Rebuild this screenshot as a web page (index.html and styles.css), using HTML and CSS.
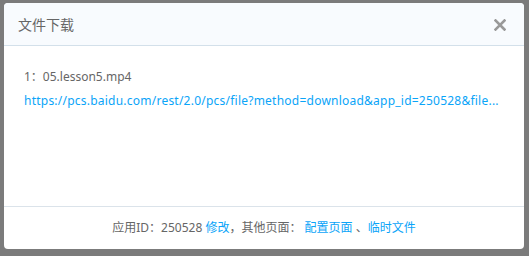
FILE: index.html
```html
<!DOCTYPE html>
<html lang="zh-CN">
<head>
<meta charset="utf-8">
<title>文件下载</title>
<link rel="stylesheet" href="styles.css">
</head>
<body>
<div class="dialog">
  <div class="dialog-header">
    <span class="dialog-title">文件下载</span>
    <span class="dialog-close" aria-label="关闭">
      <svg width="12" height="12" viewBox="0 0 12 12"><path d="M1.5 1.5 L10.5 10.5 M10.5 1.5 L1.5 10.5" stroke="#999" stroke-width="2.6" stroke-linecap="square"/></svg>
    </span>
  </div>
  <div class="dialog-body">
    <div class="file-name">1：05.lesson5.mp4</div>
    <a class="file-link" href="#">https://pcs.baidu.com/rest/2.0/pcs/file?method=download&amp;app_id=250528&amp;file...</a>
  </div>
  <div class="dialog-footer">应用ID：250528 <a href="#" class="link">修改</a>，其他页面： <a href="#" class="link">配置页面</a> 、<a href="#" class="link">临时文件</a></div>
</div>
</body>
</html>
```
FILE: styles.css
```css
html, body {
  margin: 0;
  padding: 0;
}
body {
  background: #7b7b7b;
  width: 529px;
  height: 256px;
  overflow: hidden;
  font-family: "Noto Sans", "Noto Sans CJK SC", sans-serif;
  font-size: 12px;
  color: #666;
}
.dialog {
  margin: 3px 0 0 4px;
  width: 520px;
  height: 246px;
  background: #fff;
  border-radius: 4px;
  display: flex;
  flex-direction: column;
  overflow: hidden;
}
.dialog-header {
  height: 42px;
  background: #f8fbfe;
  border-bottom: 1px solid #d3e0ea;
  display: flex;
  align-items: center;
  justify-content: space-between;
  padding: 0 18px 0 14px;
}
.dialog-title {
  font-family: "Noto Sans CJK SC", sans-serif;
  font-size: 14px;
  color: #666;
  line-height: 20px;
}
.dialog-close {
  width: 12px;
  height: 12px;
  display: flex;
  margin-top: 2px;
}
.dialog-body {
  flex: 1;
  padding: 19px 20px 0 20px;
  min-width: 0;
}
.file-name {
  line-height: 24px;
  color: #666;
}
.file-link {
  display: block;
  line-height: 24px;
  color: #0aa4f8;
  text-decoration: none;
  white-space: nowrap;
  letter-spacing: 0.23px;
}
.dialog-footer {
  height: 42px;
  line-height: 41px;
  border-top: 1px solid #dbe3ea;
  text-align: center;
  white-space: pre;
  color: #666;
}
.link {
  color: #0aa4f8;
  text-decoration: none;
}
```
